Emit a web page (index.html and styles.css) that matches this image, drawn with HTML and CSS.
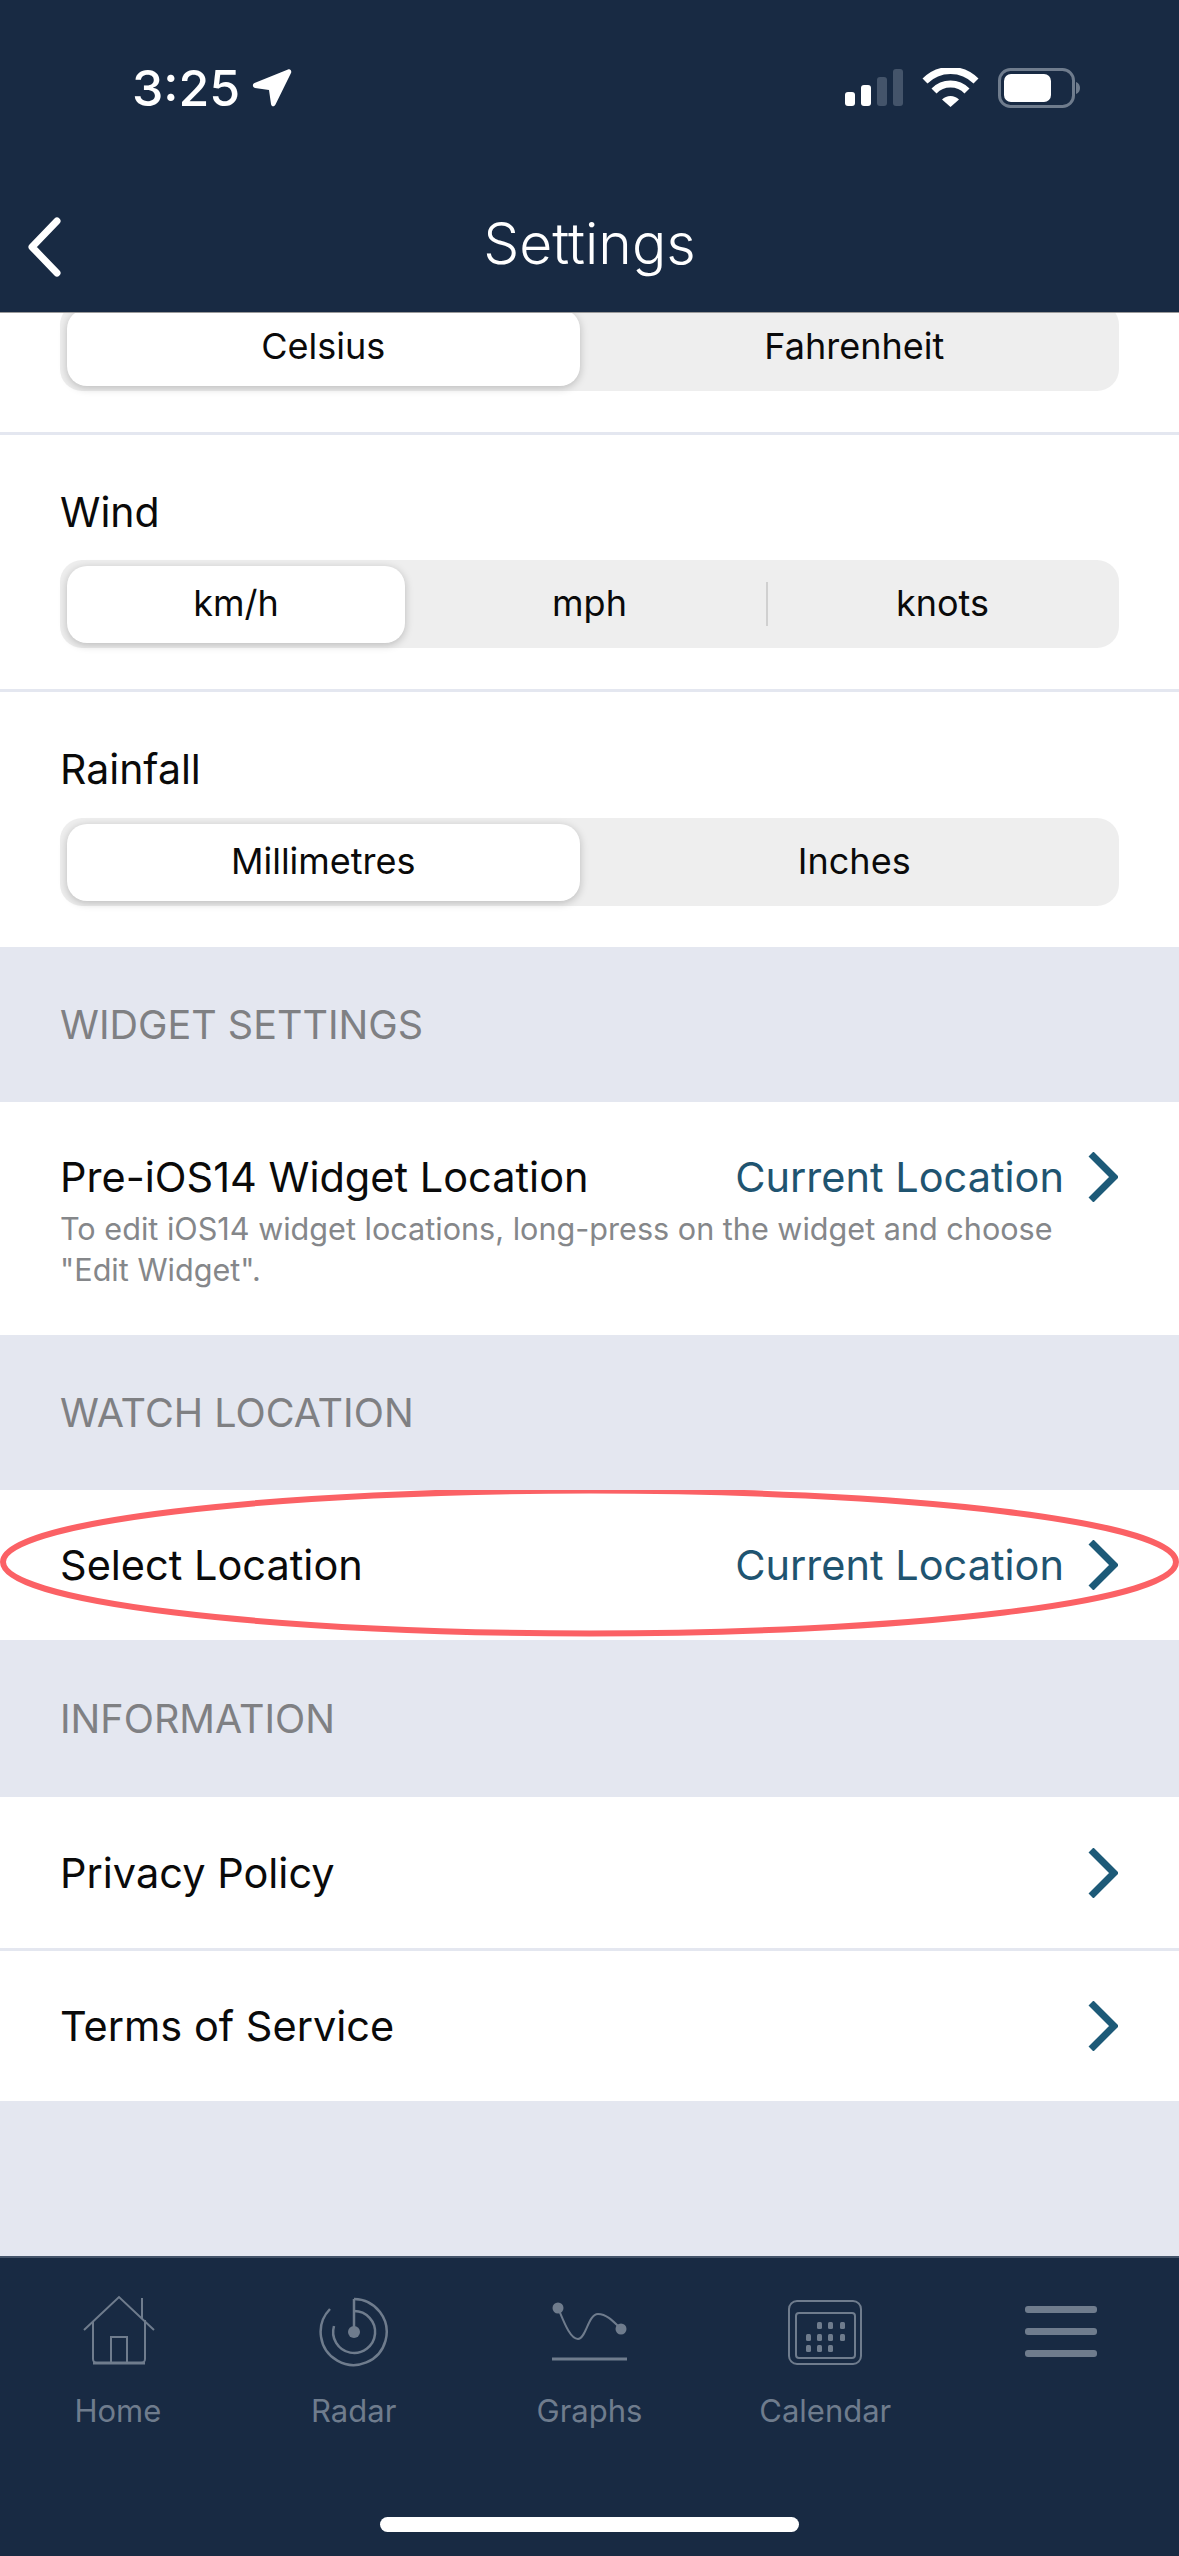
FILE: index.html
```html
<!DOCTYPE html>
<html lang="en">
<head>
    <meta charset="UTF-8">
    <meta name="viewport" content="width=device-width, initial-scale=1.0">
    <title>Settings</title>
    <link rel="stylesheet" href="styles.css">
</head>
<body>
    <div class="page">
        <!-- Status bar + title -->
        <header class="header">
            <div class="status">
                <div class="status-left">
                    <span class="time">3:25</span>
                    <svg class="arrow" width="40" height="40" viewBox="0 0 40 40">
                        <path d="M36 1.500 2.500 15c-2.500 1-2 4.500.5 5L17 22l2 14c.4 3 3.500 3 4.500.5L39 5c1-2.500-1-4.500-3-3.500z" fill="#fff"/>
                    </svg>
                </div>
                <svg class="status-right" width="236" height="42" viewBox="0 0 236 42">
                    <rect x="0" y="24" width="10" height="14" rx="3" fill="#fff"/>
                    <rect x="16" y="17" width="10" height="21" rx="3" fill="#fff"/>
                    <rect x="32" y="9" width="10" height="29" rx="3" fill="#44546a"/>
                    <rect x="48" y="1" width="10" height="37" rx="3" fill="#44546a"/>
                    <path d="M80 13a36 36 0 0 1 51 0" fill="none" stroke="#fff" stroke-width="7"/>
                    <path d="M89 23a23 23 0 0 1 33 0" fill="none" stroke="#fff" stroke-width="7"/>
                    <path d="M97 31.500a12 12 0 0 1 17 0L105.500 39z" fill="#fff"/>
                    <rect x="154.500" y="1.500" width="74" height="37" rx="11" fill="none" stroke="#6f7c8d" stroke-width="3"/>
                    <rect x="159" y="6" width="47" height="28" rx="7" fill="#fff"/>
                    <path d="M231 14c3 1 4 3.500 4 6s-1 5-4 6z" fill="#6f7c8d"/>
                </svg>
            </div>
            <div class="nav">
                <svg class="back" width="36" height="60" viewBox="0 0 36 60">
                    <path d="M31 4 6 30l25 26" fill="none" stroke="#fff" stroke-width="7" stroke-linecap="round" stroke-linejoin="round"/>
                </svg>
                <div class="nav-title">Settings</div>
            </div>
        </header>

        <main class="content">
            <div class="unit-row first">
                <div class="segment two">
                    <div class="seg-item active">Celsius</div>
                    <div class="seg-item">Fahrenheit</div>
                </div>
            </div>
            <div class="unit-row">
                <div class="unit-label">Wind</div>
                <div class="segment three">
                    <div class="seg-item active">km/h</div>
                    <div class="seg-item">mph</div>
                    <div class="seg-item sep">knots</div>
                </div>
            </div>
            <div class="unit-row last">
                <div class="unit-label">Rainfall</div>
                <div class="segment two">
                    <div class="seg-item active">Millimetres</div>
                    <div class="seg-item">Inches</div>
                </div>
            </div>

            <div class="section">Widget Settings</div>
            <div class="row tall">
                <div class="row-main">
                    <span class="row-title">Pre-iOS14 Widget Location</span>
                    <span class="row-value">Current Location</span>
                    <svg class="chevron" width="30" height="50" viewBox="0 0 30 50"><path d="M3 2l23 23L3 48" fill="none" stroke="#1d5a78" stroke-width="7"/></svg>
                </div>
                <p class="row-note">To edit iOS14 widget locations, long-press on the widget and choose<br>"Edit Widget".</p>
            </div>

            <div class="section">Watch Location</div>
            <div class="row circled">
                <div class="row-main">
                    <span class="row-title">Select Location</span>
                    <span class="row-value">Current Location</span>
                    <svg class="chevron" width="30" height="50" viewBox="0 0 30 50"><path d="M3 2l23 23L3 48" fill="none" stroke="#1d5a78" stroke-width="7"/></svg>
                </div>
                <!-- red annotation drawn on top of the screenshot -->
                <svg class="circle-mark" width="1179" height="150" viewBox="0 0 1179 150">
                    <ellipse cx="589.500" cy="72" rx="586.500" ry="71.500" fill="none" stroke="#fb6165" stroke-width="6"/>
                </svg>
            </div>

            <div class="section info">Information</div>
            <div class="row privacy">
                <div class="row-main">
                    <span class="row-title">Privacy Policy</span>
                    <svg class="chevron" width="30" height="50" viewBox="0 0 30 50"><path d="M3 2l23 23L3 48" fill="none" stroke="#1d5a78" stroke-width="7"/></svg>
                </div>
            </div>
            <div class="row-line"></div>
            <div class="row">
                <div class="row-main">
                    <span class="row-title">Terms of Service</span>
                    <svg class="chevron" width="30" height="50" viewBox="0 0 30 50"><path d="M3 2l23 23L3 48" fill="none" stroke="#1d5a78" stroke-width="7"/></svg>
                </div>
            </div>
        </main>

        <!-- Bottom tabs -->
        <footer class="tabbar">
            <div class="tabs">
                <div class="tab">
                    <svg class="tab-icon" width="100" height="72" viewBox="0 0 100 72" fill="none" stroke="#6f7c8d" stroke-width="2">
                        <path d="M16 35 51 2l35 33"/>
                        <path d="M74 3v21"/>
                        <path d="M25 27v37a4 4 0 0 0 4 4h44a4 4 0 0 0 4-4V25"/>
                        <path d="M43 68V42h16v26"/>
                        <path d="M25 68h52" stroke-width="3"/>
                    </svg>
                    <span class="tab-label">Home</span>
                </div>
                <div class="tab">
                    <svg class="tab-icon" width="100" height="72" viewBox="0 0 100 72" fill="none" stroke="#6f7c8d" stroke-width="2.500">
                        <path d="M50 4a33 33 0 1 1-24 10"/>
                        <path d="M50 16a21 21 0 1 1-20 15"/>
                        <path d="M50 4v33"/>
                        <circle cx="50" cy="37" r="6" fill="#6f7c8d" stroke="none"/>
                    </svg>
                    <span class="tab-label">Radar</span>
                </div>
                <div class="tab">
                    <svg class="tab-icon" width="100" height="72" viewBox="0 0 100 72" fill="none" stroke="#6f7c8d" stroke-width="2">
                        <path d="M19 13c6 14 12 31 20 31 8 0 10-25 20-25 9 0 16 8 23 15"/>
                        <circle cx="19" cy="13" r="5.500" fill="#6f7c8d" stroke="none"/>
                        <circle cx="82" cy="34" r="5.500" fill="#6f7c8d" stroke="none"/>
                        <path d="M13 64h75" stroke-width="3"/>
                    </svg>
                    <span class="tab-label">Graphs</span>
                </div>
                <div class="tab">
                    <svg class="tab-icon" width="100" height="72" viewBox="0 0 100 72" fill="none" stroke="#6f7c8d" stroke-width="2">
                        <rect x="14" y="6" width="72" height="63" rx="8"/>
                        <rect x="21" y="18" width="59" height="45" rx="3"/>
                        <g fill="#6f7c8d" stroke="none">
                            <rect x="42" y="27" width="5" height="7" rx="1.500"/><rect x="53" y="27" width="5" height="7" rx="1.500"/><rect x="65" y="27" width="5" height="7" rx="1.500"/>
                            <rect x="31" y="39" width="5" height="7" rx="1.500"/><rect x="42" y="39" width="5" height="7" rx="1.500"/><rect x="53" y="39" width="5" height="7" rx="1.500"/><rect x="65" y="39" width="5" height="7" rx="1.500"/>
                            <rect x="31" y="50" width="5" height="7" rx="1.500"/><rect x="42" y="50" width="5" height="7" rx="1.500"/><rect x="53" y="50" width="5" height="7" rx="1.500"/>
                        </g>
                    </svg>
                    <span class="tab-label">Calendar</span>
                </div>
                <div class="tab">
                    <div class="burger">
                        <div class="burger-bar"></div>
                        <div class="burger-bar"></div>
                        <div class="burger-bar"></div>
                    </div>
                </div>
            </div>
            <div class="home-bar"></div>
        </footer>
    </div>
</body>
</html>
```
FILE: styles.css
```css
* {
    box-sizing: border-box;
}

body {
    margin: 0;
    font-family: Inter, "Open Sans", sans-serif;
    color: #0a0a0a;
}

.page {
    width: 1179px;
    height: 2556px;
    display: flex;
    flex-direction: column;
    overflow: hidden;
    background-color: #e4e7f0;
}

/* Header */
.header {
    height: 313px;
    flex-shrink: 0;
    background-color: #182a43;
    border-bottom: 1px solid #9a9a9a;
    color: #fff;
    position: relative;
    z-index: 2;
}

.status {
    height: 217px;
    padding: 68px 98px 0 132px;
    display: flex;
    justify-content: space-between;
    align-items: flex-start;
}

.status-left {
    display: flex;
    align-items: center;
    gap: 12px;
}

.time {
    font-size: 50px;
    font-weight: 500;
    line-height: 40px;
}

.nav {
    height: 60px;
    position: relative;
    display: flex;
    justify-content: center;
    align-items: center;
}

.back {
    position: absolute;
    left: 26px;
    top: 0;
}

.nav-title {
    font-size: 57px;
    line-height: 56px;
    font-weight: 300;
    margin-top: -7px;
}

/* Unit settings */
.content {
    flex: 1;
    overflow: hidden;
}

.unit-row {
    background-color: #fff;
    padding: 52px 60px 41px;
    border-bottom: 3px solid #e4e7f0;
}

.unit-row.first {
    padding-top: 0;
    padding-bottom: 41px;
}

.unit-row.first .segment {
    margin-top: -10px;
}

.unit-row.last {
    padding-bottom: 41px;
    border-bottom: 0;
}

.unit-row.last .unit-label {
    margin-bottom: 24px;
}

.unit-label {
    font-size: 41px;
    line-height: 50px;
    margin-bottom: 23px;
}

.segment {
    height: 88px;
    display: grid;
    background-color: #eee;
    border-radius: 22px;
}

.segment.two {
    grid-template-columns: 1fr 1fr;
}

.segment.three {
    grid-template-columns: 1fr 1fr 1fr;
}

.seg-item {
    display: flex;
    align-items: center;
    justify-content: center;
    font-size: 36px;
    padding-bottom: 3px;
    position: relative;
}

.seg-item.active {
    background-color: #fff;
    margin: 6px 8px 5px 7px;
    border-radius: 20px;
    box-shadow: 0 2px 8px rgba(0, 0, 0, 0.22);
}

.segment.two .seg-item.active {
    margin-right: 10px;
}

.seg-item.sep::before {
    content: "";
    position: absolute;
    left: 0;
    top: 22px;
    bottom: 22px;
    width: 2px;
    background-color: #d0d0d0;
}

/* Lists */
.section {
    height: 155px;
    padding-left: 60px;
    display: flex;
    align-items: center;
    font-size: 39.500px;
    text-transform: uppercase;
    color: #7f8083;
}

.section.info {
    height: 157px;
}

.row {
    height: 150px;
    padding: 0 61px 0 60px;
    background-color: #fff;
    display: flex;
    flex-direction: column;
    justify-content: center;
    position: relative;
}

.row.tall {
    height: 233px;
    justify-content: flex-start;
    padding-top: 50px;
}

.row.privacy {
    height: 151px;
}

.row-main {
    display: flex;
    align-items: center;
    height: 50px;
}

.row-title {
    font-size: 41.500px;
    flex: 1;
}

.row-value {
    font-size: 41.500px;
    color: #1f5470;
    margin-right: 24px;
}

.row-note {
    margin: 6px 0 0;
    font-size: 30.600px;
    line-height: 41px;
    color: #85878a;
}

.row-line {
    height: 3px;
    background-color: #e4e7f0;
}

.circle-mark {
    position: absolute;
    left: 0;
    top: 0;
}

/* Tab bar */
.tabbar {
    height: 300px;
    flex-shrink: 0;
    background-color: #182a43;
    border-top: 2px solid #44546a;
    display: flex;
    flex-direction: column;
}

.tabs {
    display: grid;
    grid-template-columns: repeat(5, 1fr);
    padding-top: 37px;
}

.tab {
    display: flex;
    flex-direction: column;
    align-items: center;
}

.tab-icon {
    display: block;
}

.tab-label {
    margin-top: 24px;
    font-size: 31px;
    line-height: 40px;
    color: #6f7c8d;
}

.burger {
    width: 72px;
    display: flex;
    flex-direction: column;
    gap: 15px;
    padding-top: 11px;
}

.burger-bar {
    height: 7px;
    border-radius: 3px;
    background-color: #6f7c8d;
}

.home-bar {
    width: 419px;
    height: 15px;
    margin: auto auto 24px;
    border-radius: 8px;
    background-color: #fff;
}
```
